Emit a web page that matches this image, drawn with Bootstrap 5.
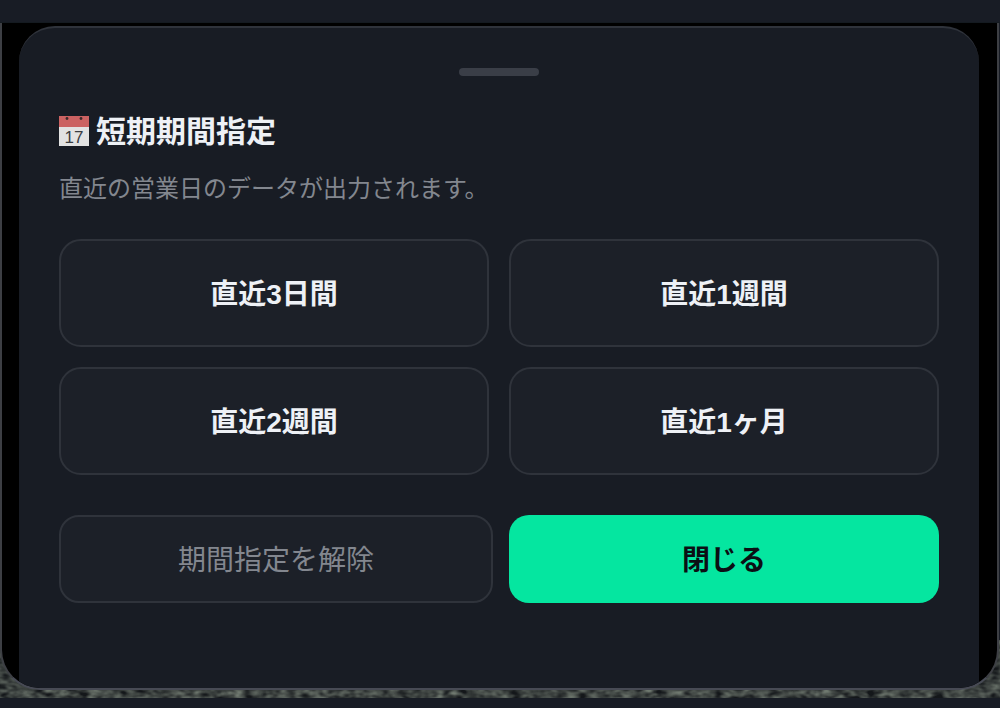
<!DOCTYPE html>
<html lang="ja">
<head>
<meta charset="utf-8">
<link href="https://cdn.jsdelivr.net/npm/bootstrap@5.3.0/dist/css/bootstrap.min.css" rel="stylesheet">
<style>
html,body{height:708px;overflow:hidden}
body{background:#181c25;font-family:"Liberation Sans","Noto Sans CJK JP",sans-serif;color:#eef1f6}
.topstrip{height:23px;background:#181c25;border-bottom:1px solid #141a20}
.noise-strip{position:absolute;left:0;top:640px;width:1000px;height:58px;z-index:-1;display:block}
.stage{height:667px;background:#000;border:solid #3d3f44;border-bottom-color:#474a54;border-width:0 2px 2px 2px;border-radius:0 0 40px 40px;margin-right:1px;padding:3px 18px 0 17px;overflow:hidden}
.sheet{height:680px;background:#181c24;border:solid #2f333b;border-width:2px 0 0;border-radius:36px 36px 0 0;padding:40px 40px 0}
.grip{width:80px;height:8px;border-radius:4px;background:#3a3e47;margin:0 auto 34px}
.sheet-title{font-size:30px;font-weight:700;line-height:44px;margin:0 0 18px}
.sheet-desc{font-size:24px;line-height:34px;color:#83878f;margin:0 0 33px}
.range-grid{display:grid;grid-template-columns:430px 430px;gap:20px;margin-bottom:40px}
.range-btn{height:108px;background:#1c2028;border:2px solid #2f333b;border-radius:22px;color:#eef1f6;font-size:28px;font-weight:700;padding:4px 0 0}
.range-btn:hover{background:#1c2028;color:#eef1f6;border-color:#2f333b}
.clear-btn,.close-btn{height:88px;border-radius:20px;font-size:28px;padding:4px 0 0}
.clear-btn{width:434px;background:#1c2028;border:2px solid #2f333b;color:#83878f}
.close-btn{width:430px;background:#05e6a0;border:0;color:#0b0f14;font-weight:700}
.clear-btn:hover{background:#1c2028;color:#83878f;border-color:#2f333b}
.close-btn:hover{background:#05e6a0;color:#0b0f14}
.cal-icon{width:30px;height:30px;flex:none;margin-top:-3px;margin-right:-1px}
</style>
</head>
<body>
<svg class="noise-strip" aria-hidden="true">
  <filter id="grain" x="0" y="0" width="100%" height="100%">
    <feTurbulence type="fractalNoise" baseFrequency="0.09 0.16" numOctaves="2" seed="4"/>
    <feColorMatrix type="matrix" values="0 0 0 0 .16  0 0 0 0 .19  0 0 0 0 .16  1.2 1.2 0 0 -0.75"/>
  </filter>
  <rect width="1000" height="58" fill="#14171a"/>
  <rect width="1000" height="58" filter="url(#grain)"/>
</svg>
<div class="topstrip"></div>
<div class="stage">
  <div class="sheet">
    <div class="grip"></div>
    <h2 class="sheet-title d-flex align-items-center gap-2">
      <svg class="cal-icon" viewBox="0 0 30 30" aria-hidden="true">
        <rect width="30" height="30" fill="#e2e2e2"/>
        <rect width="30" height="11" fill="#cb6262"/>
        <circle cx="8" cy="2.5" r="1.4" fill="#3b2a2a"/><circle cx="22" cy="2.5" r="1.4" fill="#3b2a2a"/>
        <text x="15" y="26.5" text-anchor="middle" font-size="17" font-weight="400" font-family="Liberation Sans" fill="#3a3d42">17</text>
      </svg>
      <span>短期期間指定</span>
    </h2>
    <p class="sheet-desc">直近の営業日のデータが出力されます。</p>
    <div class="range-grid">
      <button type="button" class="btn range-btn">直近3日間</button>
      <button type="button" class="btn range-btn">直近1週間</button>
      <button type="button" class="btn range-btn">直近2週間</button>
      <button type="button" class="btn range-btn">直近1ヶ月</button>
    </div>
    <div class="d-flex gap-3">
      <button type="button" class="btn clear-btn">期間指定を解除</button>
      <button type="button" class="btn close-btn">閉じる</button>
    </div>
  </div>
</div>
<script src="https://cdn.jsdelivr.net/npm/bootstrap@5.3.0/dist/js/bootstrap.bundle.min.js"></script>
</body>
</html>
